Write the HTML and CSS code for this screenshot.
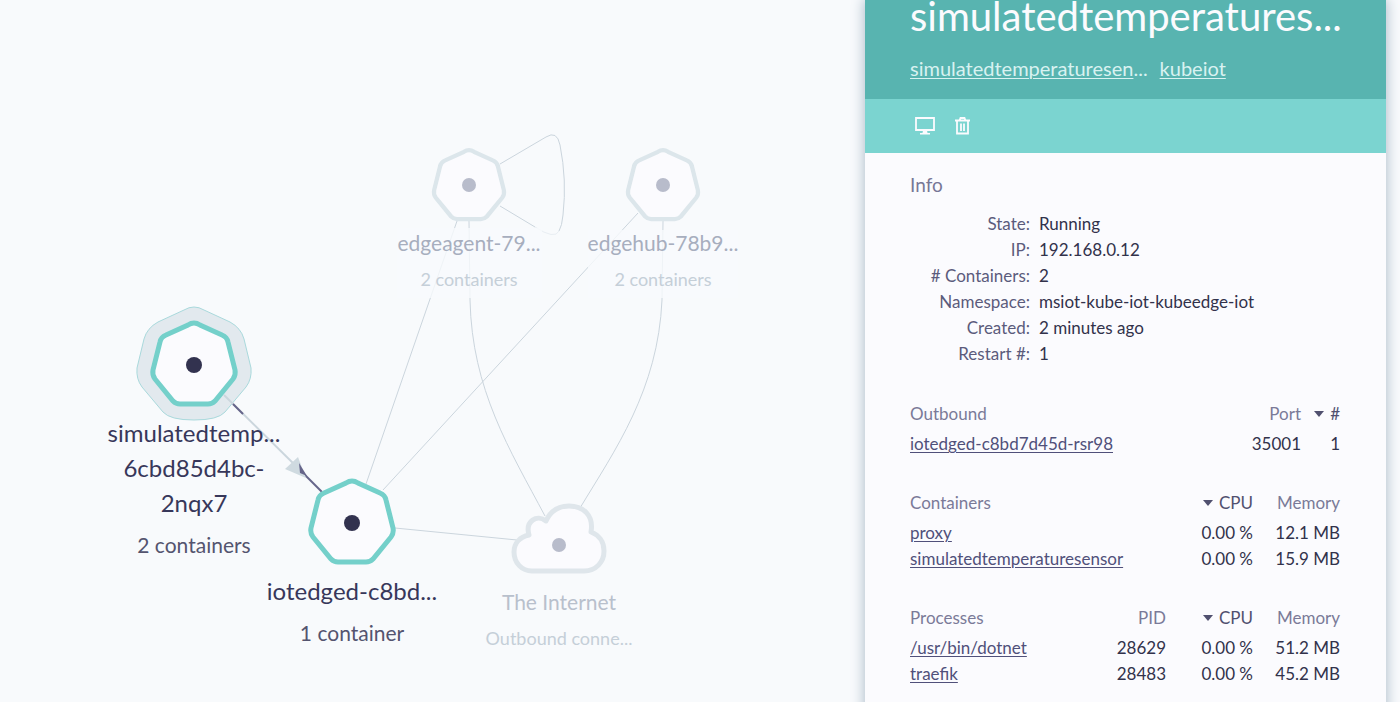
FILE: index.html
```html
<!DOCTYPE html>
<html lang="en">
<head>
<meta charset="utf-8">
<title>Pods</title>
<link rel="stylesheet" href="styles.css">
</head>
<body>
<main class="app">
  <svg class="graph" viewBox="0 0 865 702" role="img" aria-label="Pod topology">
    <defs>
      <path id="hept" d="M0 -41 Q3 -41 6 -39 L28 -29 Q33 -27 34 -22 L41 6 Q42 11 39 15 L21 37 Q18 40 14 40 L-14 40 Q-18 40 -21 37 L-39 15 Q-42 11 -41 6 L-34 -22 Q-33 -27 -28 -29 L-6 -39 Q-3 -41 0 -41 Z"/>
    </defs>
    <g class="edges">
      <path d="M500 164 L546 137 Q557 130 560 145 Q567 180 563 215 Q562 226 559 231"/>
      <path d="M500 206 L535 227"/>
      <path class="faint" d="M535 227 Q555 240 559 231"/>
      <path d="M457 221 L366 484"/>
      <path d="M469 221 L470 300 C472 390 510 450 545 516"/>
      <path d="M638 213 L383 490"/>
      <path d="M663 221 L662 300 C658 390 615 450 580 508"/>
      <path d="M395 528 L517 540"/>
    </g>
    <rect class="veil" x="397" y="228" width="145" height="70"/>
    <rect class="veil" x="588" y="230" width="150" height="68"/>

    <path class="halo" d="M194 307 Q199 307 204 310 L230 322 Q241 328 244 339 L251 368 Q252 379 246 387 L225 412 Q218 420 194 420 Q170 420 163 412 L142 387 Q136 379 137 368 L144 339 Q147 328 158 322 L184 310 Q189 307 194 307 Z"/>
    <use class="node" href="#hept" transform="translate(194 364)"/>
    <circle class="dot" cx="194" cy="365" r="8"/>
    <path class="flow-light" d="M224 395 L298 468"/>
    <path class="flow-dark" d="M233 404 L243 414"/>
    <path class="flow-dark" d="M302 472 L322 492"/>
    <path class="arrow" d="M285 469 L298 457 L306 478 Z"/>
    <path class="arrow-dark" d="M299 463 L307 476 L300 473 Z"/>

    <use class="node" href="#hept" transform="translate(352 522)"/>
    <circle class="dot" cx="352" cy="523" r="8"/>

    <use class="node dim" href="#hept" transform="translate(469 185) scale(.85)"/>
    <circle class="dot dim" cx="469" cy="185" r="7"/>
    <use class="node dim" href="#hept" transform="translate(663 185) scale(.85)"/>
    <circle class="dot dim" cx="663" cy="185" r="7"/>

    <path class="cloud" d="M532 571 H584 C596 571 604 562 604 551 C604 542 599 535 591 532 C594 515 583 506 569 506 C557 506 550 512 546 521 C537 514 525 521 529 535 C520 537 514 543 514 552 C514 563 522 571 532 571 Z"/>
    <circle class="dot dim" cx="559" cy="545" r="7"/>

    <g class="labels">
      <text class="name" x="194" y="442">simulatedtemp...</text>
      <text class="name" x="194" y="477">6cbd85d4bc-</text>
      <text class="name" x="194" y="512">2nqx7</text>
      <text class="minor" x="194" y="553">2 containers</text>
      <text class="name" x="352" y="600">iotedged-c8bd...</text>
      <text class="minor" x="352" y="641">1 container</text>
      <text class="name-dim" x="469" y="251">edgeagent-79...</text>
      <text class="minor-dim" x="469" y="286">2 containers</text>
      <text class="name-dim" x="663" y="251">edgehub-78b9...</text>
      <text class="minor-dim" x="663" y="286">2 containers</text>
      <text class="name-dim soft" x="559" y="610">The Internet</text>
      <text class="minor-dim" x="559" y="645">Outbound conne...</text>
    </g>
  </svg>

  <aside class="panel">
    <header class="head">
      <h1 class="title">simulatedtemperatures...</h1>
      <nav class="parents">
        <span><a href="#deployment">simulatedtemperaturesen</a>...</span>
        <a href="#kubeiot">kubeiot</a>
      </nav>
    </header>
    <div class="controls">
      <button class="control" type="button" aria-label="Get logs">
        <svg width="20" height="18" viewBox="0 0 20 18"><path class="stroke" d="M1 1H19V13H1Z"/><path class="fill" d="M8 13.500H12L12.500 16H15V17.500H5V16H7.500Z"/></svg>
      </button>
      <button class="control" type="button" aria-label="Delete">
        <svg width="16" height="18" viewBox="0 0 16 18"><path class="stroke" d="M0 3.500H15M2 3.500V16.500H13V3.500M4.500 3.500L5.500 1H9.500L10.500 3.500M6 6.500V14M9 6.500V14"/></svg>
      </button>
    </div>
    <div class="content">
      <h2 class="heading">Info</h2>
      <dl class="info">
        <dt>State:</dt><dd>Running</dd>
        <dt>IP:</dt><dd>192.168.0.12</dd>
        <dt># Containers:</dt><dd>2</dd>
        <dt>Namespace:</dt><dd>msiot-kube-iot-kubeedge-iot</dd>
        <dt>Created:</dt><dd>2 minutes ago</dd>
        <dt>Restart #:</dt><dd>1</dd>
      </dl>
      <table class="data">
        <thead><tr><th>Outbound</th><th class="mid">Port</th><th class="count sorted"><span class="caret"></span>#</th></tr></thead>
        <tbody><tr><td><a href="#iotedged">iotedged-c8bd7d45d-rsr98</a></td><td>35001</td><td>1</td></tr></tbody>
      </table>
      <table class="data">
        <thead><tr><th>Containers</th><th class="mid sorted"><span class="caret"></span>CPU</th><th class="mem">Memory</th></tr></thead>
        <tbody>
          <tr><td><a href="#proxy">proxy</a></td><td>0.00 %</td><td>12.1 MB</td></tr>
          <tr><td><a href="#sensor">simulatedtemperaturesensor</a></td><td>0.00 %</td><td>15.9 MB</td></tr>
        </tbody>
      </table>
      <table class="data">
        <thead><tr><th>Processes</th><th class="mid">PID</th><th class="mem sorted"><span class="caret"></span>CPU</th><th class="mem">Memory</th></tr></thead>
        <tbody>
          <tr><td><a href="#dotnet">/usr/bin/dotnet</a></td><td>28629</td><td>0.00 %</td><td>51.2 MB</td></tr>
          <tr><td><a href="#traefik">traefik</a></td><td>28483</td><td>0.00 %</td><td>45.2 MB</td></tr>
        </tbody>
      </table>
    </div>
  </aside>
</main>
</body>
</html>
```
FILE: styles.css
```css
* { box-sizing: border-box; }
body {
  margin: 0;
  background: #f8fafc;
  color: #32324b;
  font-family: Lato, "Open Sans", sans-serif;
  font-size: 17px;
}
.app { display: flex; min-height: 100vh; }
.graph { flex: 1; min-width: 0; height: 100vh; }
.panel {
  flex: 0 0 521px;
  min-width: 0;
  margin-right: 14px;
  background: #fbfbfe;
  box-shadow: 0 0 12px 1px #aebdcb;
}

.edges path { fill: none; stroke: #cbd5dd; stroke-width: 1; }
.edges .faint { stroke: #e9eef3; }
.veil { fill: #f8fafc; opacity: .8; }
.halo { fill: #e2e9ee; stroke: #a9d9dc; stroke-width: 1; }
.node { fill: #fbfbfe; stroke: #74d0ca; stroke-width: 5; }
.node.dim { stroke: #dce6eb; }
.dot { fill: #32324f; }
.dot.dim { fill: #b8bccb; }
.cloud { fill: #fbfbfe; stroke: #dfe6eb; stroke-width: 5; stroke-linejoin: round; }
.flow-light { stroke: #cbd6dd; stroke-width: 2; }
.flow-dark { stroke: #66658a; stroke-width: 2; }
.arrow { fill: #cfdae0; }
.arrow-dark { fill: #66658a; }
.labels text { text-anchor: middle; }
.name { font-size: 24px; fill: #37375a; }
.minor { font-size: 21px; fill: #54546f; }
.name-dim { font-size: 21px; fill: #a7aebe; }
.name-dim.soft { fill: #b8c0cc; }
.minor-dim { font-size: 18px; fill: #c5cfd8; }

.head { padding: 0 45px 19px; background: #58b4b0; color: #fbfbfe; }
.title { margin: 0; font-size: 40px; line-height: 32px; font-weight: 400; white-space: nowrap; }
.parents { display: flex; gap: 12px; margin-top: 24px; font-size: 20px; line-height: 24px; color: #d8f2f1; }
.parents a { color: inherit; text-underline-offset: 2px; text-decoration-thickness: 1px; }
.controls { display: flex; gap: 8px; padding: 12px 45px; background: #7bd4d0; }
.control { display: grid; place-items: center; width: 30px; height: 30px; padding: 0; border: 0; background: none; cursor: pointer; }
.stroke { fill: none; stroke: #fbfbfe; stroke-width: 1.8; }
.fill { fill: #fbfbfe; }

.content { padding: 20px 46px 16px 45px; }
.heading { margin: 0 0 14px; font-size: 19px; line-height: 24px; font-weight: 400; color: #777796; }
.info { display: grid; grid-template-columns: 120px 1fr; column-gap: 9px; margin: 0 0 34px; line-height: 26px; }
.info dt { text-align: right; color: #5b5b7c; }
.info dd { margin: 0; }
.data { width: 100%; table-layout: fixed; border-collapse: collapse; margin-bottom: 33px; line-height: 26px; }
.data th, .data td { padding: 0; text-align: right; font-weight: 400; white-space: nowrap; }
.data th { padding-bottom: 4px; color: #7a7a98; }
.data th.sorted { color: #50506f; }
.data th:first-child, .data td:first-child { text-align: left; }
.data a { color: #50507a; text-underline-offset: 2px; text-decoration-thickness: 1px; }
.mid { width: 100px; }
.count { width: 39px; }
.mem { width: 87px; }
.caret {
  display: inline-block;
  margin: 0 6px 4px 0;
  border: 5px solid transparent;
  border-top: 6px solid #50506f;
  border-bottom: 0;
  vertical-align: middle;
}
```
